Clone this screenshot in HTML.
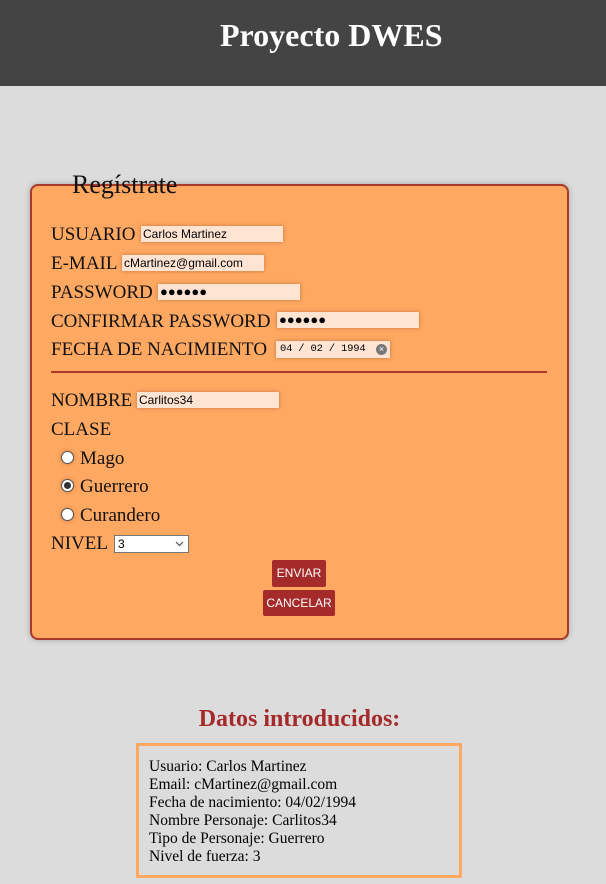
<!DOCTYPE html>
<html><head><meta charset="utf-8"><style>
*{margin:0;padding:0;box-sizing:border-box}
body{width:606px;height:884px;background:#dcdcdc;position:relative;overflow:hidden;font-family:"Liberation Serif",serif}
.a{position:absolute;white-space:nowrap;line-height:1}
.hdr{position:absolute;left:0;top:0;width:606px;height:86px;background:#444}
.l{font-size:19px;color:#111}
.in{position:absolute;background:#ffe4d4;box-shadow:0 0 4px rgba(120,60,20,.45);font-family:"Liberation Sans",sans-serif;font-size:12px;line-height:16px;padding-left:2px;color:#000;white-space:nowrap}
.pw{font-size:13px}
.rad{position:absolute;width:13px;height:13px;border-radius:50%;background:#fff;border:1px solid #555;box-shadow:0 0 4px rgba(120,60,20,.4)}
.btn{position:absolute;background:#a52a2a;color:#fff;font-family:"Liberation Sans",sans-serif;font-size:12px;text-align:center;border-radius:2px;line-height:27px}
.d{font-size:15.5px;color:#000}
</style></head><body>
<div class="hdr"></div>
<div class="a" style="left:220px;top:19px;font-size:32px;font-weight:bold;color:#fff">Proyecto DWES</div>

<div style="position:absolute;left:30px;top:184px;width:539px;height:456px;background:#ffa862;border:2px solid #a83a2a;border-radius:8px;box-shadow:0 0 6px rgba(0,0,0,.25)"></div>
<div class="a" style="left:72px;top:172px;font-size:26px;color:#111">Regístrate</div>

<div class="a l" style="left:51px;top:225px">USUARIO</div>
<div class="in" style="left:141px;top:226px;width:142px">Carlos Martinez</div>
<div class="a l" style="left:51px;top:254px">E-MAIL</div>
<div class="in" style="left:122px;top:255px;width:142px">cMartinez@gmail.com</div>
<div class="a l" style="left:51px;top:283px">PASSWORD</div>
<div class="in pw" style="left:158px;top:284px;width:142px">●●●●●●</div>
<div class="a l" style="left:51px;top:312px">CONFIRMAR PASSWORD</div>
<div class="in pw" style="left:277px;top:312px;width:142px">●●●●●●</div>
<div class="a l" style="left:51px;top:340px">FECHA DE NACIMIENTO</div>
<div class="in" style="left:276px;top:341px;width:114px;height:17px;font-family:'Liberation Mono',monospace;font-size:10.5px;line-height:17px;padding-left:4px;letter-spacing:-0.2px">04 / 02 / 1994<span style="position:absolute;right:3px;top:3px;width:11px;height:11px;border-radius:50%;background:#777;color:#fff;font-size:9px;line-height:11px;text-align:center;font-family:'Liberation Sans',sans-serif;letter-spacing:0">×</span></div>

<div style="position:absolute;left:51px;top:371px;width:496px;height:2px;background:#b0382a"></div>

<div class="a l" style="left:51px;top:391px">NOMBRE</div>
<div class="in" style="left:137px;top:392px;width:142px">Carlitos34</div>
<div class="a l" style="left:51px;top:420px">CLASE</div>
<div class="rad" style="left:61px;top:451px"></div>
<div class="a l" style="left:80px;top:449px">Mago</div>
<div class="rad" style="left:61px;top:479px"><div style="position:absolute;left:2px;top:2px;width:7px;height:7px;border-radius:50%;background:#333"></div></div>
<div class="a l" style="left:80px;top:477px">Guerrero</div>
<div class="rad" style="left:61px;top:508px"></div>
<div class="a l" style="left:80px;top:506px">Curandero</div>
<div class="a l" style="left:51px;top:534px">NIVEL</div>
<div style="position:absolute;left:114px;top:535px;width:75px;height:18px;background:#fff;border:1px solid #777;font-family:'Liberation Sans',sans-serif;font-size:12px;line-height:16px;padding-left:3px">3<svg style="position:absolute;right:4px;top:5px" width="9" height="6" viewBox="0 0 9 6"><path d="M1 1l3.5 3.5L8 1" fill="none" stroke="#555" stroke-width="1.2"/></svg></div>
<div class="btn" style="left:272px;top:560px;width:54px;height:27px">ENVIAR</div>
<div class="btn" style="left:263px;top:590px;width:72px;height:26px;line-height:26px">CANCELAR</div>

<div class="a" style="left:0;width:599px;text-align:center;top:707px;font-size:24px;font-weight:bold;color:#a52a2a">Datos introducidos:</div>
<div style="position:absolute;left:136px;top:743px;width:326px;height:135px;border:3px solid #ffa862"></div>
<div class="a d" style="left:149px;top:758px;line-height:18px">Usuario: Carlos Martinez<br>Email: cMartinez@gmail.com<br>Fecha de nacimiento: 04/02/1994<br>Nombre Personaje: Carlitos34<br>Tipo de Personaje: Guerrero<br>Nivel de fuerza: 3</div>
</body></html>
